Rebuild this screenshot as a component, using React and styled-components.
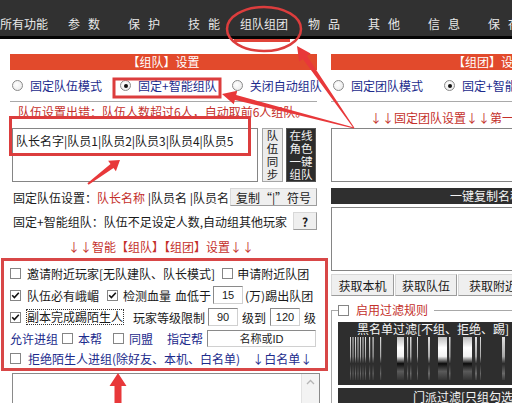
import React from "react";
import styled, { createGlobalStyle } from "styled-components";

const BLUE = "#1c2b8c";
const RED = "#c4302b";
const MARK = "#dc3d3d";

const GlobalStyle = createGlobalStyle`
  html, body { margin: 0; padding: 0; background: #fff; }
  body {
    font-family: "Noto Sans CJK SC", "Liberation Sans", sans-serif;
    font-size: 12px;
    color: #1a1a1a;
  }
`;

const Page = styled.div`
  position: relative;
  width: 512px;
  height: 403px;
  overflow: hidden;
  background: #fff;
`;

const Nav = styled.div`
  height: 36px;
  background: #313131;
  border-bottom: 3px solid #050505;
`;

const NavInner = styled.div`
  display: flex;
  align-items: flex-end;
  height: 100%;
  padding-bottom: 4px;
  box-sizing: border-box;
  margin-left: -6px;
`;

const NavItem = styled.div`
  position: relative;
  flex: 0 0 60px;
  text-align: center;
  line-height: 16px;
  color: #e8e8e8;
  white-space: nowrap;
  letter-spacing: ${(p) => (p.$spaced ? "8px" : "0")};
  text-indent: ${(p) => (p.$spaced ? "8px" : "0")};
  &::after {
    content: "";
    display: ${(p) => (p.$active ? "block" : "none")};
    position: absolute;
    left: 0;
    right: 4px;
    top: calc(100% + 7px);
    height: 3px;
    background: #e0453a;
  }
`;

const Content = styled.div`
  display: flex;
  margin-top: 15px;
`;

const LeftCol = styled.div`
  flex: 0 0 330px;
  display: flex;
  flex-direction: column;
`;

const RightCol = styled.div`
  flex: 0 0 330px;
  margin-left: 1px;
  display: flex;
  flex-direction: column;
`;

const PanelHeader = styled.div`
  width: ${(p) => p.$w}px;
  margin-left: ${(p) => p.$ml || 0}px;
  height: 16px;
  line-height: 16px;
  background: #e24a2c;
  color: #fff;
  text-align: center;
  white-space: nowrap;
`;

const RadioRow = styled.div`
  display: flex;
  align-items: center;
  height: 31px;
  padding-left: ${(p) => p.$pl}px;
  white-space: nowrap;
`;

const RadioItem = styled.label`
  display: flex;
  align-items: center;
  gap: 7px;
  color: ${BLUE};
  margin-right: ${(p) => p.$mr || 0}px;
`;

const RadioDot = styled.span`
  position: relative;
  width: 9px;
  height: 9px;
  border-radius: 50%;
  border: 1px solid #8a8a8a;
  background: radial-gradient(circle at 40% 40%, #fff, #e6e6e6);
  flex-shrink: 0;
  &::after {
    content: "";
    display: ${(p) => (p.$checked ? "block" : "none")};
    position: absolute;
    left: 2.5px;
    top: 2.5px;
    width: 4px;
    height: 4px;
    border-radius: 50%;
    background: #111;
  }
`;

const Sep = styled.div`
  height: 1px;
  background: #a9a9a9;
  margin-left: ${(p) => p.$ml || 0}px;
  margin-right: ${(p) => p.$mr || 0}px;
`;

const ErrorLine = styled.div`
  color: ${RED};
  padding-left: 18px;
  line-height: 18px;
  margin-top: 1px;
  white-space: nowrap;
`;

const EditRow = styled.div`
  display: flex;
  height: 54px;
  margin: 7px 0 0 12px;
`;

const TextBox = styled.div`
  box-sizing: border-box;
  width: ${(p) => (p.$w ? `${p.$w}px` : "100%")};
  height: ${(p) => p.$h}px;
  margin-top: ${(p) => p.$mt || 0}px;
  border: 1px solid #858585;
  background: #fff;
  padding: 4px 3px 0;
  line-height: 15px;
  white-space: nowrap;
  flex-shrink: 0;
`;

const SyncBtn = styled.div`
  box-sizing: border-box;
  width: 21px;
  margin-left: 4px;
  background: #ececec;
  border: 1px solid #a6a6a6;
  display: flex;
  flex-direction: column;
  align-items: center;
  justify-content: center;
  font-size: 11.5px;
  line-height: 13px;
  color: #222;
`;

const OnlineBtn = styled(SyncBtn)`
  width: 30px;
  margin-left: 3px;
  background: #2c2c2c;
  border-color: #555;
  color: #f2f2f2;
`;

const InfoRow = styled.div`
  display: flex;
  align-items: center;
  height: 18px;
  margin-top: 6px;
  padding: 0 13px;
  white-space: nowrap;
`;

const InfoText = styled.div`
  flex: 1;
  min-width: 0;
  overflow: hidden;
`;

const Em = styled.span`
  color: ${RED};
`;

const GrayBtn = styled.div`
  box-sizing: border-box;
  flex-shrink: 0;
  height: ${(p) => p.$h || 18}px;
  width: ${(p) => p.$w}px;
  background: #efefef;
  border: 1px solid #9c9c9c;
  border-top-color: #d8d8d8;
  border-left-color: #d8d8d8;
  display: flex;
  align-items: center;
  justify-content: center;
  font-weight: ${(p) => (p.$bold ? 700 : 400)};
  color: #1a1a1a;
  white-space: nowrap;
  overflow: hidden;
`;

const SmartTitle = styled.div`
  color: ${RED};
  text-align: center;
  margin-top: 8px;
  padding-right: 8px;
  line-height: 18px;
  white-space: nowrap;
`;

const RedBox = styled.div`
  box-sizing: border-box;
  width: 327px;
  margin: 2px 0 0 1px;
  border: 3px solid #d84747;
  padding: 1px 0 0 6px;
`;

const OptRow = styled.div`
  display: flex;
  align-items: center;
  height: ${(p) => p.$h || 22}px;
  color: ${(p) => (p.$blue ? BLUE : "#1a1a1a")};
  white-space: nowrap;
`;

const Box = styled.span`
  box-sizing: border-box;
  width: 11px;
  height: 11px;
  flex-shrink: 0;
  border: 1px solid #858585;
  background: #fff;
  display: inline-flex;
  align-items: center;
  justify-content: center;
  margin-left: ${(p) => p.$ml || 0}px;
  margin-right: ${(p) => (p.$mr === undefined ? 5 : p.$mr)}px;
`;

const Gap = styled.span`
  display: inline-block;
  width: ${(p) => p.$w}px;
  flex-shrink: 0;
`;

const Focus = styled.span`
  outline: 1px dotted #333;
  outline-offset: 0;
  line-height: 14px;
`;

const NumInput = styled.span`
  box-sizing: border-box;
  width: ${(p) => p.$w}px;
  height: ${(p) => p.$h || 18}px;
  flex-shrink: 0;
  border: 1px solid #8a8a8a;
  border-right-color: #d0d0d0;
  border-bottom-color: #d0d0d0;
  background: #fff;
  display: inline-flex;
  align-items: center;
  justify-content: center;
  color: #1a1a1a;
  font-family: "Liberation Sans", "Noto Sans CJK SC", sans-serif;
  font-size: 11px;
  margin: 0 ${(p) => p.$mr || 0}px 0 ${(p) => p.$ml || 0}px;
`;

const ListBox = styled.div`
  box-sizing: border-box;
  width: 308px;
  height: 40px;
  margin: 2px 0 0 12px;
  border: 1px solid #8a8a8a;
  display: flex;
  justify-content: flex-end;
`;

const ScrollTrack = styled.div`
  width: 17px;
  background: #f3f3f3;
  border-left: 1px solid #e2e2e2;
  display: flex;
  justify-content: center;
  padding-top: 5px;
`;

const RedHint = styled.div`
  color: ${RED};
  padding: 6px 0 0 39px;
  line-height: 20px;
  white-space: nowrap;
`;

const DarkBar = styled.div`
  margin-top: ${(p) => p.$mt || 0}px;
  height: ${(p) => p.$h}px;
  line-height: ${(p) => p.$lh || p.$h}px;
  padding-left: ${(p) => p.$pl}px;
  background: #2f2f2f;
  color: #f4f4f4;
  white-space: nowrap;
  overflow: hidden;
`;

const BtnRow = styled.div`
  display: flex;
  margin-top: 3px;
  gap: 1px;
`;

const Group = styled.fieldset`
  margin: 7px 0 0;
  padding: 0 0 0 6px;
  min-width: 0;
  border: 1px solid #a8a8a8;
  border-right: none;
  border-bottom: none;
`;

const Legend = styled.legend`
  display: flex;
  align-items: center;
  gap: 7px;
  padding: 0 6px 0 0;
  line-height: 14px;
  color: ${RED};
`;

const Band = styled.div`
  margin-top: 5px;
  height: 63px;
  background: #2e2e2e;
  color: #f6f6f6;
  overflow: hidden;
`;

const BandTitle = styled.div`
  padding-left: 19px;
  line-height: 14px;
  white-space: nowrap;
`;

const Stripes = styled.svg`
  display: block;
`;

const Overlay = styled.svg`
  position: absolute;
  left: 0;
  top: 0;
  pointer-events: none;
`;

const Check = ({ on }) =>
  on ? (
    <svg width="9" height="9" viewBox="0 0 9 9">
      <path d="M1.2 4.3 L3.4 6.6 L7.8 1.8" fill="none" stroke="#111" strokeWidth="1.6" />
    </svg>
  ) : null;

const CB = ({ on, ...rest }) => (
  <Box {...rest}>
    <Check on={on} />
  </Box>
);

const arrow = (x1, y1, x2, y2, tw, sw, hl, hw) => {
  const len = Math.hypot(x2 - x1, y2 - y1);
  const dx = (x2 - x1) / len;
  const dy = (y2 - y1) / len;
  const nx = -dy;
  const ny = dx;
  const bx = x2 - dx * hl;
  const by = y2 - dy * hl;
  const pts = [
    [x1 + (nx * tw) / 2, y1 + (ny * tw) / 2],
    [bx + (nx * sw) / 2, by + (ny * sw) / 2],
    [bx + (nx * hw) / 2, by + (ny * hw) / 2],
    [x2, y2],
    [bx - (nx * hw) / 2, by - (ny * hw) / 2],
    [bx - (nx * sw) / 2, by - (ny * sw) / 2],
    [x1 - (nx * tw) / 2, y1 - (ny * tw) / 2],
  ];
  return pts.map((p) => p.map((v) => v.toFixed(1)).join(",")).join(" ");
};

const navItems = [
  ["所有功能"],
  ["参数", true],
  ["保护", true],
  ["技能", true],
  ["组队组团", false, true],
  ["物品", true],
  ["其他", true],
  ["信息", true],
  ["保存", true],
];

const thin = [
  [12, 1], [14.5, 1], [17, 1], [19.5, 1], [22, 1], [24.5, 1], [27, 1],
  [31, 1.2], [34.5, 1.2], [42, 1.2], [69, 1.2], [72, 1.5], [79, 1],
  [90, 2], [111, 1.5], [137, 2], [142, 1], [164, 3],
];
const bright = [[59, 7], [100, 9], [125, 9]];

export default function App() {
  return (
    <Page>
      <GlobalStyle />
      <Nav>
        <NavInner>
          {navItems.map(([t, s, a]) => (
            <NavItem key={t} $spaced={s} $active={a}>
              {t}
            </NavItem>
          ))}
        </NavInner>
      </Nav>

      <Content>
        <LeftCol>
          <PanelHeader $w={307} $ml={10}>【组队】设置</PanelHeader>
          <RadioRow $pl={12}>
            <RadioItem $mr={18}>
              <RadioDot />
              固定队伍模式
            </RadioItem>
            <RadioItem $mr={15}>
              <RadioDot $checked />
              固定+智能组队
            </RadioItem>
            <RadioItem>
              <RadioDot />
              关闭自动组队
            </RadioItem>
          </RadioRow>
          <Sep $ml={10} $mr={13} />
          <ErrorLine>队伍设置出错：队伍人数超过6人，自动取前6人组队。</ErrorLine>
          <EditRow>
            <TextBox $w={246} $h={54}>队长名字|队员1|队员2|队员3|队员4|队员5</TextBox>
            <SyncBtn>
              <span>队</span>
              <span>伍</span>
              <span>同</span>
              <span>步</span>
            </SyncBtn>
            <OnlineBtn>
              <span>在线</span>
              <span>角色</span>
              <span>一键</span>
              <span>组队</span>
            </OnlineBtn>
          </EditRow>
          <InfoRow>
            <InfoText>
              固定队伍设置：<Em>队长名称</Em> |队员名 |队员名
            </InfoText>
            <GrayBtn $w={87}>复制“|”符号</GrayBtn>
          </InfoRow>
          <InfoRow>
            <InfoText>固定+智能组队：队伍不足设定人数,自动组其他玩家</InfoText>
            <GrayBtn $w={24} $bold>?</GrayBtn>
          </InfoRow>
          <SmartTitle>↓↓智能【组队】【组团】设置↓↓</SmartTitle>
          <RedBox>
            <OptRow>
              <CB $mr={6} />
              邀请附近玩家[无队建队、队长模式]
              <CB $ml={7} $mr={4} />
              申请附近队团
            </OptRow>
            <OptRow>
              <CB $mr={6} on />
              队伍必有峨嵋
              <CB $ml={8} on />
              检测血量
              <Gap $w={4} />
              血低于
              <NumInput $w={30} $ml={2} $mr={2}>15</NumInput>
              (万)踢出队团
            </OptRow>
            <OptRow>
              <CB $mr={6} on />
              <Focus>副本完成踢陌生人</Focus>
              <Gap $w={10} />
              玩家等级限制
              <NumInput $w={30} $ml={3} $mr={4}>90</NumInput>
              级到
              <NumInput $w={30} $ml={4} $mr={4}>120</NumInput>
              级
            </OptRow>
            <OptRow $blue $h={20}>
              允许进组
              <CB $ml={4} />
              本帮
              <CB $ml={11} />
              同盟
              <Gap $w={14} />
              指定帮
              <NumInput $w={109} $h={17} $ml={4}>名称或ID</NumInput>
            </OptRow>
            <OptRow $blue $h={20}>
              <CB $mr={7} />
              拒绝陌生人进组(除好友、本机、白名单)
              <Gap $w={12} />
              ↓白名单↓
            </OptRow>
          </RedBox>
          <ListBox>
            <ScrollTrack>
              <svg width="9" height="6" viewBox="0 0 9 6">
                <path d="M1 5 L4.5 1.5 L8 5" fill="none" stroke="#b5b5b5" strokeWidth="1.3" />
              </svg>
            </ScrollTrack>
          </ListBox>
        </LeftCol>

        <RightCol>
          <PanelHeader $w={316}>【组团】设置</PanelHeader>
          <RadioRow $pl={2}>
            <RadioItem $mr={21}>
              <RadioDot />
              固定团队模式
            </RadioItem>
            <RadioItem>
              <RadioDot $checked />
              固定+智能组团
            </RadioItem>
          </RadioRow>
          <Sep />
          <RedHint>↓↓固定团队设置↓↓第一个为团长↓↓</RedHint>
          <TextBox $h={54} />
          <DarkBar $mt={6} $h={16} $pl={119}>一键复制名称到剪切板</DarkBar>
          <TextBox $h={64} $mt={3} />
          <BtnRow>
            <GrayBtn $w={63} $h={22}>获取本机</GrayBtn>
            <GrayBtn $w={62} $h={22}>获取队伍</GrayBtn>
            <GrayBtn $w={70} $h={22}>获取附近</GrayBtn>
          </BtnRow>
          <Group>
            <Legend>
              <CB $mr={0} />
              启用过滤规则
            </Legend>
            <Band>
              <BandTitle>黑名单过滤[不组、拒绝、踢]</BandTitle>
              <Stripes width="174" height="46" viewBox="0 0 174 46">
                <defs>
                  <linearGradient id="gb" x1="0" y1="0" x2="0" y2="1">
                    <stop offset="0" stopColor="#bdbdbd" />
                    <stop offset="0.25" stopColor="#ffffff" />
                    <stop offset="0.45" stopColor="#f2f2f2" />
                    <stop offset="0.62" stopColor="#0c0c0c" />
                    <stop offset="0.8" stopColor="#5a5a5a" />
                    <stop offset="1" stopColor="#333" />
                  </linearGradient>
                  <linearGradient id="gt" x1="0" y1="0" x2="0" y2="1">
                    <stop offset="0" stopColor="#e0e0e0" />
                    <stop offset="0.45" stopColor="#a8a8a8" />
                    <stop offset="0.62" stopColor="#2a2a2a" />
                    <stop offset="0.85" stopColor="#6a6a6a" />
                    <stop offset="1" stopColor="#3a3a3a" />
                  </linearGradient>
                </defs>
                {thin.map(([x, w]) => (
                  <rect key={`t${x}`} x={x} y="1" width={w} height="43" fill="url(#gt)" />
                ))}
                {bright.map(([x, w]) => (
                  <rect key={`b${x}`} x={x} y="1" width={w} height="43" fill="url(#gb)" />
                ))}
              </Stripes>
            </Band>
            <DarkBar $mt={3} $h={20} $lh={18} $pl={75}>门派过滤[只组勾选门派]</DarkBar>
          </Group>
        </RightCol>
      </Content>

      <Overlay width="512" height="403" viewBox="0 0 512 403">
        <ellipse cx="264" cy="29" rx="37" ry="22" fill="none" stroke={MARK} strokeWidth="2.5" />
        <rect x="114" y="79" width="106" height="18" fill="none" stroke={MARK} strokeWidth="3" />
        <rect x="10.5" y="117.5" width="239" height="37" fill="none" stroke={MARK} strokeWidth="3" />
        <polygon points={arrow(354, 128, 297, 46, 1, 5, 14, 14)} fill="#e8383a" />
        <polygon points={arrow(354, 128, 222, 94, 1, 5, 14, 14)} fill="#e8383a" />
        <polygon points={arrow(88, 184, 120, 160, 2, 5, 10, 13)} fill="#e8383a" />
        <polygon points={arrow(118, 410, 118, 373, 7, 7, 13, 17)} fill="#e8383a" />
      </Overlay>
    </Page>
  );
}
